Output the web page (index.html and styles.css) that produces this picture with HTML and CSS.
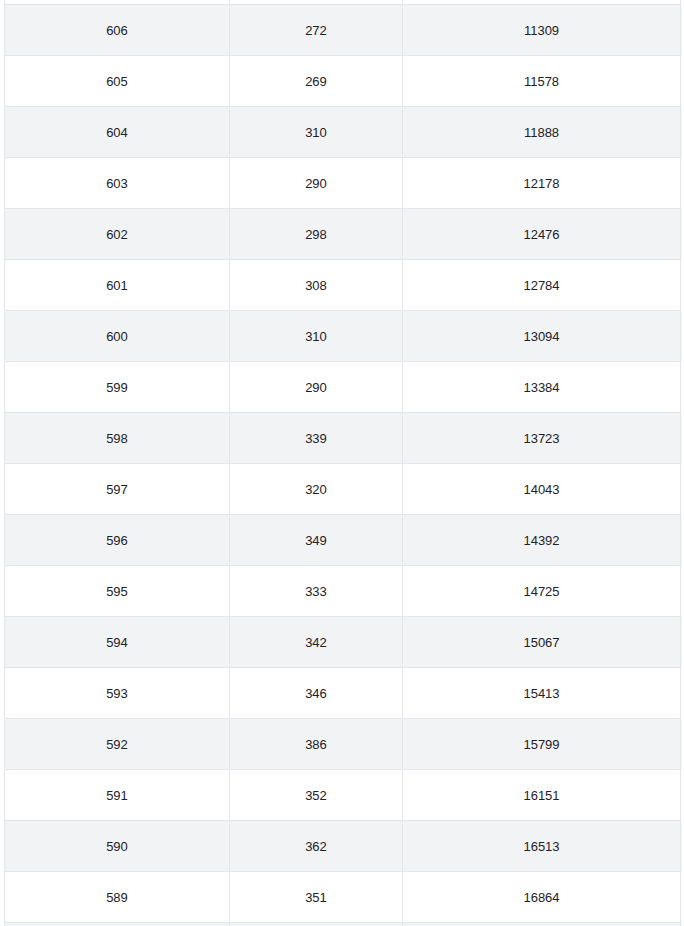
FILE: index.html
```html
<!DOCTYPE html>
<html>
<head>
<meta charset="utf-8">
<link rel="stylesheet" href="styles.css">
</head>
<body>
<div class="table">
  <div class="row edge-top"><div class="cell"></div><div class="cell"></div><div class="cell"></div></div>
  <div class="row alt"><div class="cell">606</div><div class="cell">272</div><div class="cell">11309</div></div>
  <div class="row"><div class="cell">605</div><div class="cell">269</div><div class="cell">11578</div></div>
  <div class="row alt"><div class="cell">604</div><div class="cell">310</div><div class="cell">11888</div></div>
  <div class="row"><div class="cell">603</div><div class="cell">290</div><div class="cell">12178</div></div>
  <div class="row alt"><div class="cell">602</div><div class="cell">298</div><div class="cell">12476</div></div>
  <div class="row"><div class="cell">601</div><div class="cell">308</div><div class="cell">12784</div></div>
  <div class="row alt"><div class="cell">600</div><div class="cell">310</div><div class="cell">13094</div></div>
  <div class="row"><div class="cell">599</div><div class="cell">290</div><div class="cell">13384</div></div>
  <div class="row alt"><div class="cell">598</div><div class="cell">339</div><div class="cell">13723</div></div>
  <div class="row"><div class="cell">597</div><div class="cell">320</div><div class="cell">14043</div></div>
  <div class="row alt"><div class="cell">596</div><div class="cell">349</div><div class="cell">14392</div></div>
  <div class="row"><div class="cell">595</div><div class="cell">333</div><div class="cell">14725</div></div>
  <div class="row alt"><div class="cell">594</div><div class="cell">342</div><div class="cell">15067</div></div>
  <div class="row"><div class="cell">593</div><div class="cell">346</div><div class="cell">15413</div></div>
  <div class="row alt"><div class="cell">592</div><div class="cell">386</div><div class="cell">15799</div></div>
  <div class="row"><div class="cell">591</div><div class="cell">352</div><div class="cell">16151</div></div>
  <div class="row alt"><div class="cell">590</div><div class="cell">362</div><div class="cell">16513</div></div>
  <div class="row"><div class="cell">589</div><div class="cell">351</div><div class="cell">16864</div></div>
  <div class="row alt edge-bottom"><div class="cell"></div><div class="cell"></div><div class="cell"></div></div>
</div>
</body>
</html>
```

FILE: styles.css
```css
html, body {
  margin: 0;
  padding: 0;
  background: #ffffff;
  overflow: hidden;
}
body {
  font-family: "Liberation Sans", Arial, sans-serif;
  font-size: 13px;
  color: #1d2129;
}
.table {
  margin: 0 0 0 4px;
  width: 677px;
  border-left: 1px solid #e5e6eb;
}
.row {
  display: grid;
  grid-template-columns: 225px 173px 278px;
  height: 51px;
  background: #ffffff;
}
.row.alt {
  background: #f2f3f5;
}
.row.edge-top {
  height: 5px;
}
.row.edge-bottom {
  height: 4px;
}
.row.edge-bottom .cell {
  border-bottom: none;
}
.cell {
  display: flex;
  align-items: center;
  justify-content: center;
  border-right: 1px solid #e5e6eb;
  border-bottom: 1px solid #e5e6eb;
  box-sizing: border-box;
  line-height: 1;
}
```
